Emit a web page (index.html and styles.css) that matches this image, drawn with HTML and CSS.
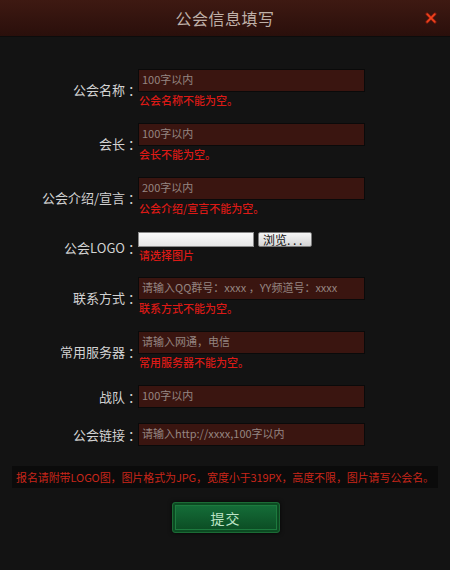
FILE: index.html
```html
<!DOCTYPE html>
<html lang="zh-CN">
<head>
<meta charset="utf-8">
<title>公会信息填写</title>
<link rel="stylesheet" href="styles.css">
</head>
<body>
<div class="dialog">
  <div class="header">
    <span class="title">公会信息填写</span>
    <span class="close"><svg width="12" height="12" viewBox="0 0 12 12"><path d="M2 2 L10 10 M10 2 L2 10" stroke="#8a1a0e" stroke-width="3.2" stroke-linecap="round" opacity="0.7"/><path d="M2.2 2.2 L9.8 9.8 M9.8 2.2 L2.2 9.8" stroke="#f0421c" stroke-width="1.8" stroke-linecap="round"/></svg></span>
  </div>
  <form class="form">
    <div class="row err">
      <label class="label">公会名称<span class="colon">：</span></label>
      <div class="field"><input class="txt" type="text" placeholder="100字以内"><div class="error">公会名称不能为空。</div></div>
    </div>
    <div class="row err">
      <label class="label">会长<span class="colon">：</span></label>
      <div class="field"><input class="txt" type="text" placeholder="100字以内"><div class="error">会长不能为空。</div></div>
    </div>
    <div class="row err">
      <label class="label">公会介绍/宣言<span class="colon">：</span></label>
      <div class="field"><input class="txt" type="text" placeholder="200字以内"><div class="error">公会介绍/宣言不能为空。</div></div>
    </div>
    <div class="row logo">
      <label class="label">公会LOGO<span class="colon">：</span></label>
      <div class="field">
        <div class="file"><span class="filebox"></span><span class="browse">浏览. . .</span></div>
        <div class="error">请选择图片</div>
      </div>
    </div>
    <div class="row err">
      <label class="label">联系方式<span class="colon">：</span></label>
      <div class="field"><input class="txt" type="text" placeholder="请输入QQ群号：xxxx ，YY频道号：xxxx"><div class="error">联系方式不能为空。</div></div>
    </div>
    <div class="row err">
      <label class="label">常用服务器<span class="colon">：</span></label>
      <div class="field"><input class="txt" type="text" placeholder="请输入网通，电信"><div class="error">常用服务器不能为空。</div></div>
    </div>
    <div class="row plain">
      <label class="label">战队<span class="colon">：</span></label>
      <div class="field"><input class="txt" type="text" placeholder="100字以内"></div>
    </div>
    <div class="row plain last">
      <label class="label">公会链接<span class="colon">：</span></label>
      <div class="field"><input class="txt" type="text" placeholder="请输入http://xxxx,100字以内"></div>
    </div>
    <div class="notice">报名请附带LOGO图，图片格式为JPG，宽度小于319PX，高度不限，图片请写公会名。</div>
    <div class="actions"><button type="button" class="submit">提交</button></div>
  </form>
</div>
</body>
</html>
```
FILE: styles.css
```css
html, body {
  margin: 0;
  padding: 0;
  background: #131313;
}
body {
  font-family: "Noto Sans CJK SC", "Microsoft YaHei", "Liberation Sans", sans-serif;
}
.dialog {
  width: 450px;
  height: 570px;
  background: #131313;
}
.header {
  position: relative;
  box-sizing: border-box;
  height: 37px;
  background: linear-gradient(#3e1912, #2a0f0b);
  border-bottom: 1px solid #0c0c0c;
  display: flex;
  align-items: center;
  justify-content: center;
}
.title {
  color: #bfb0a8;
  font-size: 16px;
  line-height: 20px;
  letter-spacing: 0.5px;
  margin-top: -1px;
}
.close {
  position: absolute;
  right: 13px;
  top: 12px;
  width: 12px;
  height: 12px;
  display: block;
}
.close svg { display: block; }
.form {
  padding-top: 32px;
}
.row {
  display: grid;
  grid-template-columns: 138px 227px;
  align-items: center;
}
.row.err { margin-bottom: 15px; }
.row.err .field { height: 39px; }
.row.err .label { padding-top: 3px; }
.row.logo { margin-bottom: 14px; }
.row.logo .field { height: 32px; }
.row.logo .label { padding-top: 2px; }
.row.plain { margin-bottom: 15px; }
.row.plain .field { height: 23px; }
.row.last { margin-bottom: 20px; }
.label {
  text-align: right;
  color: #d2d2d2;
  font-size: 13px;
  line-height: 16px;
  white-space: nowrap;
}
.colon {
  display: inline-block;
  width: 10px;
  margin-left: 3px;
  text-align: left;
}
.field {
  display: flex;
  flex-direction: column;
}
.txt {
  box-sizing: border-box;
  display: block;
  flex: none;
  width: 227px;
  height: 23px;
  margin: 0;
  padding: 0 0 4px 3px;
  border: 1px solid #0a0a0a;
  background: #3a1510;
  color: #bbb;
  font-family: inherit;
  font-size: 11px;
  outline: none;
}
.txt::placeholder {
  color: #958581;
}
.error {
  color: #dc1a16;
  font-size: 11px;
  font-weight: 500;
  line-height: 16px;
  padding-left: 1px;
}
.file {
  display: flex;
  align-items: center;
  gap: 4px;
  height: 16px;
  flex: none;
}
.filebox {
  box-sizing: border-box;
  width: 116px;
  height: 15px;
  background: linear-gradient(#fbfbfb, #e6e6e6);
  border: 1px solid #8a8a8a;
}
.browse {
  box-sizing: border-box;
  width: 54px;
  height: 15px;
  background: linear-gradient(#f6f6f6, #d4d4d4);
  border: 1px solid #7c7c7c;
  border-radius: 2px;
  color: #111;
  font-size: 12px;
  line-height: 13px;
  padding-left: 4px;
  white-space: nowrap;
  overflow: hidden;
}
.notice {
  margin: 0 12px;
  height: 22px;
  background: #0b0b0b;
  color: #c8261a;
  font-size: 11px;
  line-height: 22px;
  letter-spacing: -0.1px;
  text-align: center;
  white-space: nowrap;
  overflow: hidden;
}
.actions {
  display: flex;
  justify-content: center;
  margin-top: 14px;
}
.submit {
  box-sizing: border-box;
  width: 108px;
  height: 31px;
  margin-left: 1px;
  border: 1px solid #1b6b35;
  border-radius: 3px;
  background: linear-gradient(#15703a, #0b4a22);
  box-shadow: inset 0 0 0 2px #0c4a22, inset 0 0 0 3px #1d7a3e, 0 0 4px rgba(0,0,0,0.8);
  color: #bde4c6;
  font-family: inherit;
  font-size: 14px;
  letter-spacing: 1px;
  cursor: pointer;
}
```
